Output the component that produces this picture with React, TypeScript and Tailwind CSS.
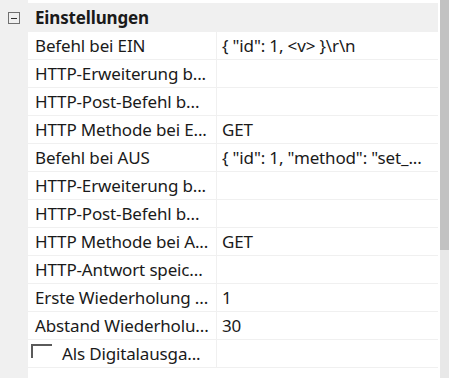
import React from "react";

const rows: { label: string; value: string }[] = [
  { label: "Befehl bei EIN", value: "{ \"id\": 1, <v> }\\r\\n" },
  { label: "HTTP-Erweiterung b...", value: "" },
  { label: "HTTP-Post-Befehl b...", value: "" },
  { label: "HTTP Methode bei E...", value: "GET" },
  { label: "Befehl bei AUS", value: "{ \"id\": 1, \"method\": \"set_..." },
  { label: "HTTP-Erweiterung b...", value: "" },
  { label: "HTTP-Post-Befehl b...", value: "" },
  { label: "HTTP Methode bei A...", value: "GET" },
  { label: "HTTP-Antwort speic...", value: "" },
  { label: "Erste Wiederholung ...", value: "1" },
  { label: "Abstand Wiederholu...", value: "30" },
];

function Row({ label, value }: { label: string; value: string }) {
  return (
    <div className="flex h-[28px] border-b border-[#f0f0f0]">
      <div className="w-[28px] shrink-0 bg-[#f0f0f0]" />
      <div className="w-[189px] shrink-0 flex items-center pl-[7px] border-r border-[#f0f0f0] whitespace-nowrap overflow-hidden">
        {label}
      </div>
      <div className="flex-1 flex items-center pl-[5px] whitespace-nowrap overflow-hidden">
        {value}
      </div>
    </div>
  );
}

export default function App() {
  return (
    <div
      className="w-[449px] h-[378px] flex overflow-hidden bg-white text-[17px] text-[#1a1a1a] tracking-[-0.15px]"
      style={{ fontFamily: "'Noto Sans', 'Open Sans', sans-serif" }}
    >
      <div className="flex-1 flex flex-col">
        {/* cut-off row above */}
        <div className="flex h-[4px] border-b border-[#f0f0f0]">
          <div className="w-[28px] shrink-0 bg-[#f0f0f0]" />
          <div className="flex-1 mr-[2px]" />
        </div>

        {/* category header */}
        <div className="flex items-center h-[28px] bg-[#f0f0f0]">
          <div className="w-[28px] shrink-0 flex items-center justify-center">
            <div className="w-[12px] h-[12px] border border-[#707070] flex items-center justify-center">
              <div className="w-[6px] h-px bg-[#303030]" />
            </div>
          </div>
          <div className="pl-[7px] font-bold">Einstellungen</div>
        </div>

        {rows.map((r, i) => (
          <Row key={i} label={r.label} value={r.value} />
        ))}

        {/* checkbox row */}
        <div className="flex h-[28px] border-b border-[#f0f0f0]">
          <div className="w-[28px] shrink-0 bg-[#f0f0f0]" />
          <div className="w-[189px] shrink-0 flex items-center border-r border-[#f0f0f0] whitespace-nowrap overflow-hidden">
            <div className="ml-[3px] w-[21px] h-[14px] border-t-2 border-l-2 border-[#5a5a5a] self-start mt-[4px]" />
            <span className="ml-[10px]">Als Digitalausga...</span>
          </div>
          <div className="flex-1" />
        </div>
        <div className="flex flex-1">
          <div className="w-[28px] shrink-0 bg-[#f0f0f0]" />
          <div className="flex-1" />
        </div>
      </div>

      {/* scrollbar */}
      <div className="w-[9px] ml-[2px] bg-[#e8e8e8] flex flex-col">
        <div className="h-[250px] bg-[#c2c2c2]" />
      </div>
    </div>
  );
}
